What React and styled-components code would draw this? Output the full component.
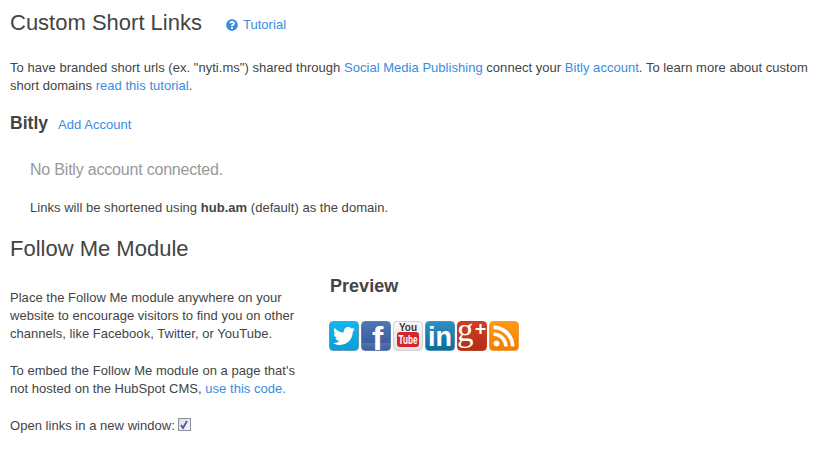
import React from "react";
import styled, { createGlobalStyle } from "styled-components";
import { FaTwitter, FaRss, FaQuestionCircle } from "react-icons/fa";

const GlobalStyle = createGlobalStyle`
  html, body {
    margin: 0;
    padding: 0;
    background: #fff;
  }
  body {
    font-family: "Liberation Sans", Arial, sans-serif;
    font-size: 13px;
    line-height: 18px;
    letter-spacing: 0.03px;
    color: #444;
  }
`;

const Page = styled.div`
  width: 817px;
  height: 452px;
  overflow: hidden;
  padding: 10px 0 0 10px;
  box-sizing: border-box;
`;

const TitleRow = styled.div`
  display: flex;
  align-items: center;
  height: 26px;
  gap: 24px;
`;

const Title = styled.h2`
  margin: 0;
  font-size: 22px;
  line-height: 26px;
  font-weight: 400;
  letter-spacing: 0;
  color: #444;
`;

const Link = styled.a`
  color: #3b8be0;
  text-decoration: none;
`;

const TutorialLink = styled(Link)`
  display: flex;
  align-items: center;
  gap: 5px;
  padding-top: 3px;
  svg {
    font-size: 12px;
  }
`;

const Intro = styled.p`
  margin: 23px 0 0;
  width: 807px;
`;

const AccountRow = styled.div`
  display: flex;
  align-items: baseline;
  gap: 10px;
  margin-top: 17px;
`;

const AccountName = styled.h3`
  margin: 0;
  font-size: 17.5px;
  line-height: 22px;
  font-weight: 700;
  color: #444;
`;

const AccountBlock = styled.div`
  padding: 26px 0 0 20px;
`;

const EmptyNote = styled.div`
  font-size: 16px;
  line-height: 20px;
  letter-spacing: -0.2px;
  color: #999;
`;

const DomainNote = styled.p`
  margin: 19px 0 0;
`;

const ModuleTitle = styled(Title)`
  margin-top: 19px;
`;

const Columns = styled.div`
  display: flex;
  margin-top: 11px;
`;

const LeftColumn = styled.div`
  width: 320px;
  flex: none;
  padding-top: 16px;
`;

const Paragraph = styled.p`
  margin: 0 0 19px;
  width: 295px;
`;

const WindowRow = styled.label`
  display: flex;
  align-items: center;
  gap: 3px;
  margin-top: 1px;
`;

const CheckBox = styled.span`
  width: 11px;
  height: 11px;
  border: 1px solid #8f8f9d;
  background: linear-gradient(135deg, #dcdce4, #f6f6f9);
  display: flex;
  align-items: center;
  justify-content: center;
  margin-top: -3px;
`;

const PreviewTitle = styled.h3`
  margin: 0;
  font-size: 18px;
  line-height: 22px;
  font-weight: 700;
  color: #444;
`;

const RightColumn = styled.div`
  padding-top: 2px;
`;

const IconRow = styled.div`
  display: flex;
  gap: 2px;
  margin-top: 24px;
  margin-left: -1px;
`;

const Tile = styled.span`
  width: 30px;
  height: 30px;
  border-radius: 4px;
  overflow: hidden;
  display: flex;
  align-items: center;
  justify-content: center;
  box-sizing: border-box;
  background: ${(p) => p.$bg};
  border: 1px solid ${(p) => p.$edge};
  color: #fff;
`;

const TileSvg = styled.svg`
  width: 28px;
  height: 28px;
  flex: none;
  display: block;
`;

const App = () => (
  <>
    <GlobalStyle />
    <Page>
      <TitleRow>
        <Title>Custom Short Links</Title>
        <TutorialLink href="#">
          <FaQuestionCircle />
          Tutorial
        </TutorialLink>
      </TitleRow>
      <Intro>
        To have branded short urls (ex. "nyti.ms") shared through <Link href="#">Social Media Publishing</Link> connect your <Link href="#">Bitly account</Link>. To learn more about custom short domains <Link href="#">read this tutorial</Link>.
      </Intro>
      <AccountRow>
        <AccountName>Bitly</AccountName>
        <Link href="#">Add Account</Link>
      </AccountRow>
      <AccountBlock>
        <EmptyNote>No Bitly account connected.</EmptyNote>
        <DomainNote>
          Links will be shortened using <b>hub.am</b> (default) as the domain.
        </DomainNote>
      </AccountBlock>
      <ModuleTitle>Follow Me Module</ModuleTitle>
      <Columns>
        <LeftColumn>
          <Paragraph>
            Place the Follow Me module anywhere on your website to encourage visitors to find you on other channels, like Facebook, Twitter, or YouTube.
          </Paragraph>
          <Paragraph>
            To embed the Follow Me module on a page that's not hosted on the HubSpot CMS, <Link href="#">use this code.</Link>
          </Paragraph>
          <WindowRow>
            Open links in a new window:
            <CheckBox>
              <svg width="10" height="10" viewBox="0 0 10 10">
                <path d="M2 5l2 3 4-7" fill="none" stroke="#4a5aa8" strokeWidth="1.8" />
              </svg>
            </CheckBox>
          </WindowRow>
        </LeftColumn>
        <RightColumn>
          <PreviewTitle>Preview</PreviewTitle>
          <IconRow>
            <Tile $bg="linear-gradient(#12b5ee, #0a9fd8)" $edge="#5d9db8">
              <FaTwitter size={22} />
            </Tile>
            <Tile $bg="linear-gradient(#4f74b4 0, #3c5e9f 75%, #5474a8 76%, #3f5f9c 100%)" $edge="#5f7fb0">
              <TileSvg viewBox="0 0 28 28">
                <text x="10" y="28" fontFamily="Liberation Sans" fontWeight="700" fontSize="34" fill="#fff">f</text>
              </TileSvg>
            </Tile>
            <Tile $bg="linear-gradient(#f7f7f7, #e4e4e4)" $edge="#d2d2d2">
              <TileSvg viewBox="0 0 28 28">
                <text x="14" y="9" textAnchor="middle" fontFamily="Liberation Sans" fontWeight="700" fontSize="10" fill="#3a3a3a">You</text>
                <rect x="3" y="10" width="22" height="15" rx="3" fill="#d6262c" />
                <text x="14" y="22" textAnchor="middle" fontFamily="Liberation Sans" fontWeight="700" fontSize="12" fill="#fff" textLength="19" lengthAdjust="spacingAndGlyphs">Tube</text>
              </TileSvg>
            </Tile>
            <Tile $bg="linear-gradient(#2f8fc0, #0f6a9c)" $edge="#4f93b5">
              <TileSvg viewBox="0 0 28 28">
                <text x="14" y="24" textAnchor="middle" fontFamily="Liberation Sans" fontWeight="700" fontSize="27" fill="#fff">in</text>
              </TileSvg>
            </Tile>
            <Tile $bg="linear-gradient(#cf3e24, #b0301a)" $edge="#c0402a">
              <TileSvg viewBox="0 0 28 28">
                <text x="-1" y="19" fontFamily="Liberation Serif" fontWeight="400" fontSize="33" fill="#fff">g</text>
                <path d="M17.500 7h10M22.500 2v10" stroke="#fff" strokeWidth="2.2" />
              </TileSvg>
            </Tile>
            <Tile $bg="linear-gradient(#ff9a12, #f57c00)" $edge="#f0a040">
              <FaRss size={24} />
            </Tile>
          </IconRow>
        </RightColumn>
      </Columns>
    </Page>
  </>
);

export default App;
